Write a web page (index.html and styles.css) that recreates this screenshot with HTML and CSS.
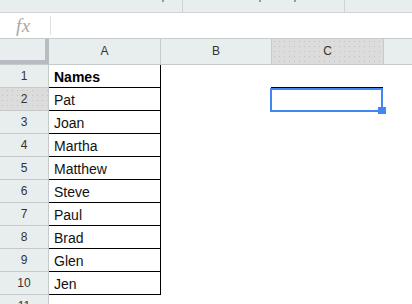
FILE: index.html
```html
<!DOCTYPE html>
<html>
<head>
<meta charset="utf-8">
<link rel="stylesheet" href="styles.css">
</head>
<body>
<div class="page">
  <div class="topbar">
    <div class="tb-seg seg1"><span class="mark m1"></span></div>
    <div class="tb-seg seg2"><span class="mark m2"></span><span class="mark m3"></span></div>
    <div class="tb-seg seg3"></div>
  </div>
  <div class="formula">
    <div class="fx">fx</div>
    <div class="fsep"></div>
    <div class="finput"></div>
  </div>
  <div class="colheads">
    <div class="corner"></div>
    <div class="ch cha">A</div>
    <div class="ch chb">B</div>
    <div class="ch chc sel">C</div>
    <div class="ch chd"></div>
  </div>
  <div class="rows">
    <div class="row"><div class="rh">1</div><div class="ca bold">Names</div><div class="rest"></div></div>
    <div class="row"><div class="rh rsel">2</div><div class="ca">Pat</div><div class="rest"></div></div>
    <div class="row"><div class="rh">3</div><div class="ca">Joan</div><div class="rest"></div></div>
    <div class="row"><div class="rh">4</div><div class="ca">Martha</div><div class="rest"></div></div>
    <div class="row"><div class="rh">5</div><div class="ca">Matthew</div><div class="rest"></div></div>
    <div class="row"><div class="rh">6</div><div class="ca">Steve</div><div class="rest"></div></div>
    <div class="row"><div class="rh">7</div><div class="ca">Paul</div><div class="rest"></div></div>
    <div class="row"><div class="rh">8</div><div class="ca">Brad</div><div class="rest"></div></div>
    <div class="row"><div class="rh">9</div><div class="ca">Glen</div><div class="rest"></div></div>
    <div class="row"><div class="rh">10</div><div class="ca">Jen</div><div class="rest"></div></div>
    <div class="row last"><div class="rh">11</div><div class="ce"></div><div class="rest"></div></div>
  </div>
  <div class="sel-shadow"></div>
  <div class="selection"></div>
  <div class="handle"></div>
</div>
</body>
</html>
```

FILE: styles.css
```css
* { box-sizing: border-box; }
html, body { margin: 0; padding: 0; }
body {
  width: 412px;
  height: 304px;
  overflow: hidden;
  background: #fff;
  font-family: "Liberation Sans", Arial, sans-serif;
  color: #222;
}
.page { position: relative; width: 412px; height: 304px; overflow: hidden; }

.topbar {
  display: flex;
  height: 13px;
  background: #e8eeed;
  border-bottom: 1px solid #cfd4d3;
}
.tb-seg { display: flex; align-items: flex-start; height: 12px; }
.seg1 { width: 183px; border-right: 1px solid #cfd4d3; }
.seg2 { width: 162px; border-right: 1px solid #cfd4d3; }
.seg3 { flex: 1; }
.mark { display: block; width: 2px; height: 2px; background: #9a9a9a; }
.m1 { margin-left: 162px; }
.m2 { margin-left: 76px; }
.m3 { margin-left: 33px; }

.formula {
  display: flex;
  align-items: center;
  height: 26px;
  border-bottom: 1px solid #c9cccc;
  background: #fff;
}
.fx {
  width: 50px;
  padding-left: 16px;
  font-family: "Liberation Serif", "Times New Roman", serif;
  font-style: italic;
  font-size: 19px;
  color: #a8a8a8;
  line-height: 20px;
  letter-spacing: 0.5px;
}
.fsep { width: 1px; height: 19px; background: #e0e0e0; }
.finput { flex: 1; }

.colheads {
  display: flex;
  height: 26px;
  border-bottom: 1px solid #c6c9c9;
  background: #e8eeed;
}
.corner {
  width: 49px;
  height: 25px;
  border-right: 4px solid #b9bbc2;
  border-bottom: 4px solid #b9bbc2;
}
.ch {
  height: 25px;
  font-size: 12px;
  line-height: 25px;
  text-align: center;
  color: #333;
  border-right: 1px solid #c6c9c9;
}
.cha { width: 112px; }
.chb { width: 111px; }
.chc { width: 112px; }
.chd { flex: 1; border-right: none; }

.sel, .rsel {
  background-color: #dcdcdc;
  background-image: radial-gradient(circle, #c2c2c2 0.7px, transparent 0.9px);
  background-size: 5px 5px;
}

.rows { display: flex; flex-direction: column; }
.row { display: flex; height: 23px; }
.rh {
  width: 49px;
  height: 23px;
  background-color: #e8eeed;
  border-right: 1px solid #c6c9c9;
  border-bottom: 1px solid #c6c9c9;
  font-size: 12px;
  line-height: 22px;
  text-align: center;
  color: #333;
}
.rh.rsel { background-color: #dcdcdc; }
.ca {
  width: 112px;
  height: 23px;
  border-right: 1px solid #000;
  border-bottom: 1px solid #000;
  font-size: 14px;
  line-height: 16px;
  padding: 4px 0 0 5px;
  color: #111;
}
.ca.bold { font-weight: bold; color: #000; }
.ce { width: 112px; }
.rest { flex: 1; }
.row.last { height: 12px; }
.row.last .rh { height: 23px; border-bottom: none; }

.sel-shadow {
  position: absolute;
  left: 271px;
  top: 87px;
  width: 112px;
  height: 18px;
  border-top: 1px solid #000;
  border-right: 2px solid #000;
}
.selection {
  position: absolute;
  left: 270px;
  top: 88px;
  width: 113px;
  height: 24px;
  border: 2px solid #4285f4;
}
.handle {
  position: absolute;
  left: 378px;
  top: 107px;
  width: 8px;
  height: 7px;
  background: #4285f4;
}
```
